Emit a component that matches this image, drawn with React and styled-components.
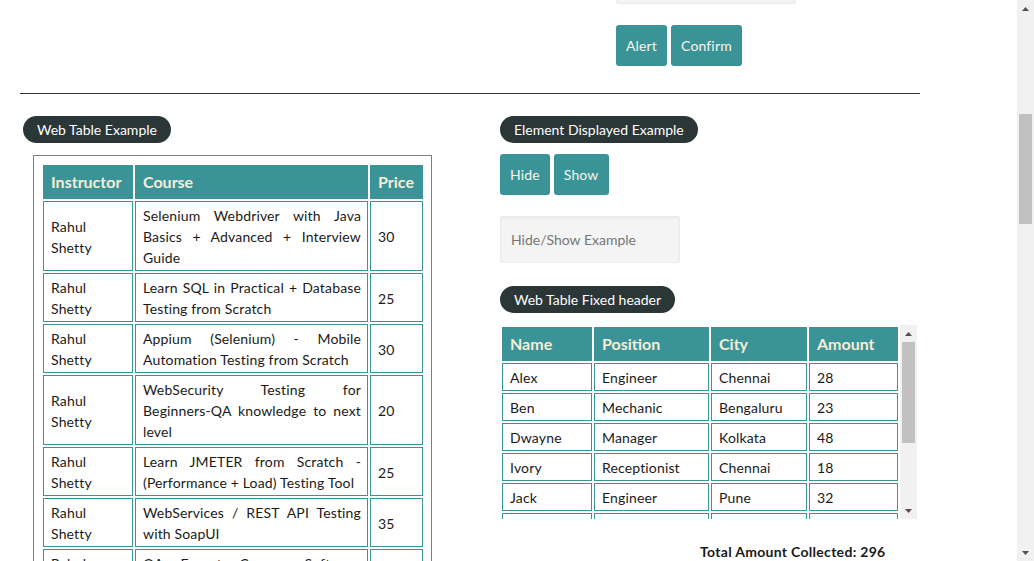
import React, { useLayoutEffect, useRef, useState } from 'react';
import styled, { createGlobalStyle } from 'styled-components';

const courses = [
  ['Selenium Webdriver with Java Basics + Advanced + Interview Guide', 30],
  ['Learn SQL in Practical + Database Testing from Scratch', 25],
  ['Appium (Selenium) - Mobile Automation Testing from Scratch', 30],
  ['WebSecurity Testing for Beginners-QA knowledge to next level', 20],
  ['Learn JMETER from Scratch - (Performance + Load) Testing Tool', 25],
  ['WebServices / REST API Testing with SoapUI', 35],
  ['QA Expert Course :Software Testing + Bugzilla + SQL + Agile', 25],
  ['Master Selenium Automation in simple Python Language', 25],
  ['Advanced Selenium Framework Pageobject, TestNG, Maven, Jenkins,C', 20],
  ['Write effective QA Resume that will turn to interview call', 0],
];

const people = [
  ['Alex', 'Engineer', 'Chennai', 28],
  ['Ben', 'Mechanic', 'Bengaluru', 23],
  ['Dwayne', 'Manager', 'Kolkata', 48],
  ['Ivory', 'Receptionist', 'Chennai', 18],
  ['Jack', 'Engineer', 'Pune', 32],
  ['Joe', 'Postman', 'Chennai', 46],
  ['Raymond', 'Businessman', 'Mumbai', 37],
  ['Ronaldo', 'Sportsman', 'Chennai', 31],
  ['Smith', 'Cricketer', 'Delhi', 33],
];

const GlobalStyle = createGlobalStyle`
  html, body {
    margin: 0;
    overflow: hidden;
  }
  body {
    font-family: Lato, "Open Sans", sans-serif;
    font-size: 14px;
    letter-spacing: 0.15px;
    color: #1a1a1a;
    background: #fff;
  }
`;

// measures a scrolled box and returns where its thumb should sit
const thumbOf = (el) => {
  const track = el.clientHeight - 34;
  const height = Math.max(20, Math.round((track * el.clientHeight) / el.scrollHeight));
  const top = Math.round((track * el.scrollTop) / el.scrollHeight);
  return { top, height };
};

const Scrollbar = ({ thumb }) => (
  <Bar>
    <ArrowBtn>
      <svg width="7" height="4" viewBox="0 0 7 4"><polygon points="3.5,0 7,4 0,4" fill="#505050" /></svg>
    </ArrowBtn>
    <Track>
      <Thumb style={{ marginTop: thumb.top, height: thumb.height }} />
    </Track>
    <ArrowBtn>
      <svg width="7" height="4" viewBox="0 0 7 4"><polygon points="0,0 7,0 3.5,4" fill="#505050" /></svg>
    </ArrowBtn>
  </Bar>
);

const App = () => {
  const pageRef = useRef(null);
  const ruleRef = useRef(null);
  const boxRef = useRef(null);
  const [pageThumb, setPageThumb] = useState({ top: 96, height: 109 });
  const [boxThumb, setBoxThumb] = useState({ top: 0, height: 102 });

  useLayoutEffect(() => {
    const page = pageRef.current;
    const rule = ruleRef.current;
    const top = rule.getBoundingClientRect().top - page.getBoundingClientRect().top + page.scrollTop;
    page.scrollTop = top - 93;
    setPageThumb(thumbOf(page));
    setBoxThumb(thumbOf(boxRef.current));
  }, []);

  const total = people.reduce((sum, p) => sum + p[3], 0);

  return (
    <Shell>
      <GlobalStyle />
      <Viewport ref={pageRef}>
        <Content>
          <TopBar>
            <Logo>QA Academy</Logo>
            <Nav>
              <NavLink>Home</NavLink>
              <NavLink>Practice</NavLink>
              <NavLink>Login</NavLink>
              <NavLink>Signup</NavLink>
            </Nav>
          </TopBar>
          <Title>Practice Page</Title>

          <Columns>
            <Section>
              <Legend>Radio Button Example</Legend>
              <Choices>
                <label><input type="radio" name="r" /> Radio1</label>
                <label><input type="radio" name="r" /> Radio2</label>
                <label><input type="radio" name="r" /> Radio3</label>
              </Choices>
            </Section>
            <Section>
              <Legend>Suggession Class Example</Legend>
              <Field placeholder="Type to Select Countries" />
            </Section>
          </Columns>

          <Columns>
            <Section>
              <Legend>Dropdown Example</Legend>
              <Select defaultValue="">
                <option value="">Select</option>
                <option>Option1</option>
                <option>Option2</option>
                <option>Option3</option>
              </Select>
            </Section>
            <Section>
              <Legend>Checkbox Example</Legend>
              <Choices>
                <label><input type="checkbox" /> Option1</label>
                <label><input type="checkbox" /> Option2</label>
                <label><input type="checkbox" /> Option3</label>
              </Choices>
            </Section>
          </Columns>

          <Columns>
            <Section $short>
              <Legend>Switch Window Example</Legend>
              <Button>Open Window</Button>
            </Section>
            <Section $short>
              <Legend>Switch Tab Example</Legend>
              <Button>Open Tab</Button>
            </Section>
          </Columns>

          <Columns>
            <div />
            <AlertBlock>
              <Legend>Switch To Alert Example</Legend>
              <Field placeholder="Enter Your Name" $gap={12} />
              <Buttons $gap={21}>
                <Button>Alert</Button>
                <Button>Confirm</Button>
              </Buttons>
            </AlertBlock>
          </Columns>

          <Rule ref={ruleRef} />

          <Columns $lower>
            <LeftCol>
              <Legend>Web Table Example</Legend>
              <TableBox>
                <Table>
                  <thead>
                    <tr>
                      <Th $w={74}>Instructor</Th>
                      <Th $w={217}>Course</Th>
                      <Th $w={37}>Price</Th>
                    </tr>
                  </thead>
                  <tbody>
                    {courses.map(([course, price]) => (
                      <tr key={course}>
                        <Td>Rahul Shetty</Td>
                        <Td $justify>{course}</Td>
                        <Td>{price}</Td>
                      </tr>
                    ))}
                  </tbody>
                </Table>
              </TableBox>
            </LeftCol>

            <RightCol>
              <Legend>Element Displayed Example</Legend>
              <Buttons $gap={11}>
                <Button>Hide</Button>
                <Button>Show</Button>
              </Buttons>
              <Field placeholder="Hide/Show Example" $gap={21} />
              <Legend $gap={23}>Web Table Fixed header</Legend>
              <FixedBox>
                <BoxView ref={boxRef}>
                  <Table>
                    <thead>
                      <tr>
                        <Th $w={74} $sticky>Name</Th>
                        <Th $w={99} $sticky>Position</Th>
                        <Th $w={80} $sticky>City</Th>
                        <Th $w={73} $sticky>Amount</Th>
                      </tr>
                    </thead>
                    <tbody>
                      {people.map((p) => (
                        <tr key={p[0]}>
                          {p.map((v, i) => (
                            <Td key={i}>{v}</Td>
                          ))}
                        </tr>
                      ))}
                    </tbody>
                  </Table>
                </BoxView>
                <Scrollbar thumb={boxThumb} />
              </FixedBox>
              <TotalAmount>Total Amount Collected: {total}</TotalAmount>
            </RightCol>
          </Columns>

          <Rule />

          <Section>
            <Legend>Mouse Hover Example</Legend>
            <Button>Mouse Hover</Button>
          </Section>

          <Section>
            <Legend>iFrame Example</Legend>
            <FrameBox />
          </Section>

          <Footer>Copyright 2024 QA Academy</Footer>
        </Content>
      </Viewport>
      <Scrollbar thumb={pageThumb} />
    </Shell>
  );
};

const Shell = styled.div`
  display: flex;
  height: 100vh;
`;

const Viewport = styled.div`
  flex: 1;
  overflow: hidden;
`;

const Bar = styled.div`
  width: 17px;
  flex: none;
  display: flex;
  flex-direction: column;
  background: #f1f1f1;
`;

const ArrowBtn = styled.div`
  height: 17px;
  flex: none;
  display: flex;
  align-items: center;
  justify-content: center;
  svg {
    display: block;
  }
`;

const Track = styled.div`
  flex: 1;
  display: flex;
  flex-direction: column;
  align-items: center;
`;

const Thumb = styled.div`
  width: 13px;
  background: #c1c1c1;
`;

const Content = styled.div`
  width: 900px;
  padding: 0 20px;
`;

const TopBar = styled.div`
  height: 64px;
  display: flex;
  align-items: center;
  justify-content: space-between;
`;

const Logo = styled.div`
  font-size: 22px;
  font-weight: bold;
  color: #2c3838;
`;

const Nav = styled.div`
  display: flex;
  gap: 8px;
`;

const NavLink = styled.span`
  background: #3a9396;
  color: #fff;
  padding: 6px 12px;
  border-radius: 3px;
`;

const Title = styled.h1`
  margin: 0;
  height: 32px;
  font-size: 26px;
  text-align: center;
`;

const Columns = styled.div`
  display: grid;
  grid-template-columns: 480px 420px;
  align-items: start;
  margin-top: ${(p) => (p.$lower ? '22px' : '0')};
`;

const Section = styled.div`
  min-height: ${(p) => (p.$short ? '80px' : '90px')};
  display: flex;
  flex-direction: column;
  align-items: flex-start;
  gap: 12px;
  padding-left: 3px;
  margin-bottom: 20px;
`;

const Choices = styled.div`
  display: flex;
  gap: 16px;
`;

const Select = styled.select`
  width: 180px;
  height: 32px;
  font-family: inherit;
`;

const Legend = styled.div`
  display: inline-block;
  margin-top: ${(p) => p.$gap || 0}px;
  background: #2b3637;
  color: #fff;
  font-size: 14px;
  letter-spacing: 0;
  line-height: 19px;
  padding: 4px 14px;
  border-radius: 14px;
`;

const Buttons = styled.div`
  display: flex;
  gap: 4px;
  margin-top: ${(p) => p.$gap || 0}px;
`;

const Button = styled.button`
  background: #3a9396;
  color: #f7f5ec;
  font-family: inherit;
  font-size: 14px;
  letter-spacing: 0.15px;
  line-height: 21px;
  padding: 10px 10px;
  border: none;
  border-radius: 3px;
`;

const Field = styled.input`
  box-sizing: border-box;
  width: 180px;
  height: 47px;
  margin: ${(p) => p.$gap || 0}px 0 0;
  padding: 0 10px;
  background: #f4f4f4;
  border: 1px solid #ececec;
  border-radius: 2px;
  box-shadow: 0 1px 2px rgba(0, 0, 0, 0.06) inset;
  font-family: inherit;
  font-size: 14px;
  color: #444;
  &::placeholder {
    color: #777;
  }
`;

const AlertBlock = styled.div`
  display: flex;
  flex-direction: column;
  align-items: flex-start;
  padding-left: 116px;
`;

const Rule = styled.div`
  border-top: 1px solid #333;
  margin-top: 27px;
`;

const LeftCol = styled.div`
  display: flex;
  flex-direction: column;
  align-items: flex-start;
  padding-left: 3px;
`;

const TableBox = styled.div`
  margin: 12px 0 0 10px;
  border: 1px solid #808080;
  padding: 7px 6px 7px 7px;
`;

const Table = styled.table`
  border-collapse: separate;
  border-spacing: 2px;
`;

const Th = styled.th`
  width: ${(p) => p.$w}px;
  background: #3a9396;
  color: #f6edd6;
  border: 1px solid #3a9396;
  padding: 6px 7px 7px;
  font-size: 16px;
  letter-spacing: 0;
  line-height: 19px;
  text-align: left;
  ${(p) => p.$sticky && 'position: sticky; top: 0;'}
`;

const Td = styled.td`
  border: 1px solid #3a9396;
  padding: 3px 6px 2px 7px;
  line-height: 21px;
  font-size: 14px;
  text-align: ${(p) => (p.$justify ? 'justify' : 'left')};
  vertical-align: middle;
`;

const RightCol = styled.div`
  display: flex;
  flex-direction: column;
  align-items: flex-start;
`;

const FixedBox = styled.div`
  margin-top: 12px;
  display: flex;
  height: 194px;
`;

const BoxView = styled.div`
  width: 400px;
  overflow: hidden;
`;

const TotalAmount = styled.div`
  margin-top: 24px;
  padding-left: 200px;
  font-weight: bold;
  font-size: 14px;
  letter-spacing: 0.3px;
`;

const FrameBox = styled.div`
  width: 880px;
  height: 1100px;
  border: 1px solid #ccc;
`;

const Footer = styled.div`
  height: 120px;
  display: flex;
  align-items: center;
  justify-content: center;
  color: #666;
`;

export default App;
